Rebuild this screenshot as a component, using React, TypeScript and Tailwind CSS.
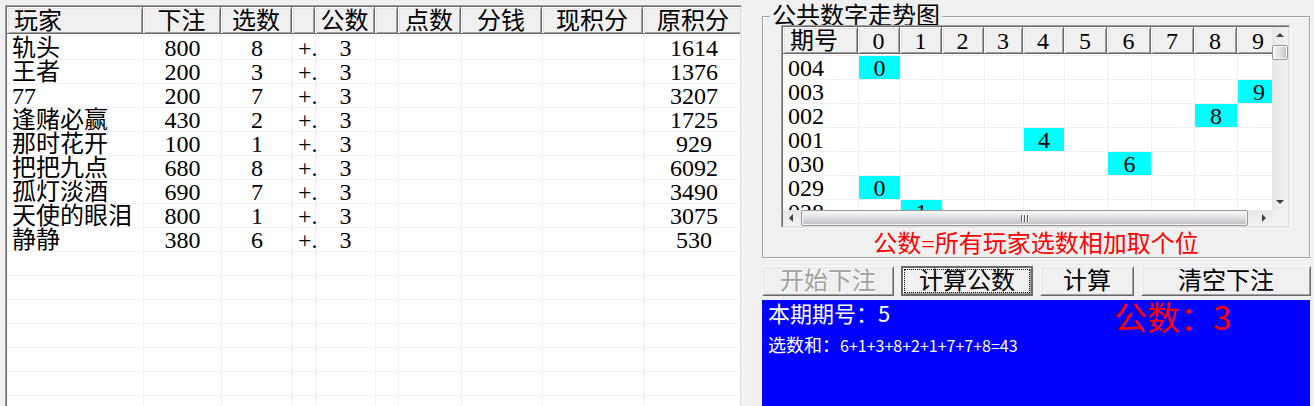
import React from "react";

type Player = { name: string; bet: number; pick: number; original: number };

const players: Player[] = [
  { name: "轨头", bet: 800, pick: 8, original: 1614 },
  { name: "王者", bet: 200, pick: 3, original: 1376 },
  { name: "77", bet: 200, pick: 7, original: 3207 },
  { name: "逢赌必赢", bet: 430, pick: 2, original: 1725 },
  { name: "那时花开", bet: 100, pick: 1, original: 929 },
  { name: "把把九点", bet: 680, pick: 8, original: 6092 },
  { name: "孤灯淡酒", bet: 690, pick: 7, original: 3490 },
  { name: "天使的眼泪", bet: 800, pick: 1, original: 3075 },
  { name: "静静", bet: 380, pick: 6, original: 530 },
];

const publicNumber = 3;
const emptyRows = 7;

const playerHeads = ["玩家", "下注", "选数", "", "公数", "", "点数", "分钱", "现积分", "原积分"];

const trend = [
  { period: "004", digit: 0 },
  { period: "003", digit: 9 },
  { period: "002", digit: 8 },
  { period: "001", digit: 4 },
  { period: "030", digit: 6 },
  { period: "029", digit: 0 },
  { period: "028", digit: 1 },
];

const digits = [0, 1, 2, 3, 4, 5, 6, 7, 8, 9];

const sunken =
  "border-t border-r-2 border-b-2 border-l border-t-[#696969] border-l-[#696969] border-r-[#e3e3e3] border-b-[#e3e3e3] shadow-[-1px_-1px_0_#a0a0a0,1px_1px_0_#fff]";

function HeadCell({ children, left }: { children?: React.ReactNode; left?: boolean }) {
  return (
    <th
      className={`h-[27px] whitespace-nowrap border-r border-b border-[#696969] bg-[#f0f0f0] p-0 pt-[2px] font-normal leading-6 shadow-[inset_1px_1px_0_#fff,inset_2px_2px_0_#e3e3e3,inset_-1px_-1px_0_#a0a0a0] ${
        left ? "pl-[7px] text-left" : "text-center"
      }`}
    >
      {children}
    </th>
  );
}

function Cell({
  children,
  kind = "center",
  lit,
}: {
  children?: React.ReactNode;
  kind?: "first" | "center" | "start";
  lit?: boolean;
}) {
  const look = {
    first: "pl-[5px] text-left",
    center: "border-l text-center",
    start: "border-l pl-[5px] text-left",
  }[kind];
  return (
    <td
      className={`h-6 whitespace-nowrap border-b border-[#f0f0f0] p-0 pt-[2px] leading-[21px] ${look} ${
        lit ? "bg-[#00ffff]" : ""
      }`}
    >
      {children}
    </td>
  );
}

function SpacerRow({ columns }: { columns: number }) {
  return (
    <tr>
      {Array.from({ length: columns }, (_, i) => (
        <td key={i} className={`h-[2px] border-b border-[#f0f0f0] p-0 ${i ? "border-l" : ""}`} />
      ))}
    </tr>
  );
}

function PlayerTable() {
  return (
    <table className="w-[calc(100%+4px)] table-fixed border-separate border-spacing-0">
      <colgroup>
        <col className="w-[136px]" />
        <col className="w-[78px]" />
        <col className="w-[71px]" />
        <col className="w-[23px]" />
        <col className="w-[60px]" />
        <col className="w-[23px]" />
        <col className="w-[63px]" />
        <col className="w-[81px]" />
        <col className="w-[101px]" />
        <col />
      </colgroup>
      <thead>
        <tr>
          {playerHeads.map((head, i) => (
            <HeadCell key={i} left={i === 0}>
              {head}
            </HeadCell>
          ))}
        </tr>
      </thead>
      <tbody>
        <SpacerRow columns={10} />
        {players.map((p) => (
          <tr key={p.name}>
            <Cell kind="first">{p.name}</Cell>
            <Cell>{p.bet}</Cell>
            <Cell>{p.pick}</Cell>
            <Cell kind="start">+.</Cell>
            <Cell>{publicNumber}</Cell>
            <Cell />
            <Cell />
            <Cell />
            <Cell />
            <Cell>{p.original}</Cell>
          </tr>
        ))}
        {Array.from({ length: emptyRows }, (_, r) => (
          <tr key={r}>
            {playerHeads.map((_, i) => (
              <Cell key={i} kind={i ? "center" : "first"} />
            ))}
          </tr>
        ))}
      </tbody>
    </table>
  );
}

function TrendTable() {
  return (
    <table className="w-[497px] table-fixed border-separate border-spacing-0">
      <colgroup>
        <col className="w-[75px]" />
        <col className="w-[42px]" />
        <col className="w-[42px]" />
        <col className="w-[42px]" />
        <col className="w-[39px]" />
        <col className="w-[41px]" />
        <col className="w-[43px]" />
        <col className="w-[44px]" />
        <col className="w-[43px]" />
        <col className="w-[43px]" />
        <col className="w-[43px]" />
      </colgroup>
      <thead>
        <tr>
          <HeadCell left>期号</HeadCell>
          {digits.map((d) => (
            <HeadCell key={d}>{d}</HeadCell>
          ))}
        </tr>
      </thead>
      <tbody>
        <SpacerRow columns={11} />
        {trend.map((row) => (
          <tr key={row.period}>
            <Cell kind="first">{row.period}</Cell>
            {digits.map((d) => (
              <Cell key={d} lit={d === row.digit}>
                {d === row.digit ? d : null}
              </Cell>
            ))}
          </tr>
        ))}
      </tbody>
    </table>
  );
}

function Arrow({ points, label }: { points: string; label: string }) {
  return (
    <button type="button" aria-label={label} className="flex size-4 shrink-0 items-center justify-center">
      <svg viewBox="0 0 8 8" className="size-2" aria-hidden="true">
        <polygon points={points} fill="#404040" />
      </svg>
    </button>
  );
}

function VerticalScroll() {
  return (
    <div className="flex w-4 shrink-0 flex-col bg-gradient-to-r from-[#e6e6e6] to-[#f2f2f2]">
      <Arrow label="向上" points="0,6 4,2 8,6" />
      <div className="mt-[2px] h-[15px] shrink-0 rounded-[2px] border border-[#979797] bg-gradient-to-r from-[#f5f5f5] via-[#e2e2e4] to-[#bfc0c4] shadow-[inset_0_0_0_1px_#fff]" />
      <div className="grow" />
      <Arrow label="向下" points="0,2 4,6 8,2" />
    </div>
  );
}

function HorizontalScroll() {
  return (
    <div className="flex h-4 bg-[#f0f0f0]">
      <div className="flex min-w-0 grow bg-gradient-to-b from-[#e6e6e6] to-[#f2f2f2]">
        <Arrow label="向左" points="6,0 2,4 6,8" />
        <div className="ml-[2px] flex grow items-center justify-center gap-px rounded-[2px] border border-[#979797] bg-gradient-to-b from-[#f5f5f5] from-10% via-[#dcdde0] via-50% to-[#bfc0c4] shadow-[inset_0_0_0_1px_#f4f4f4]">
          <span className="h-[7px] w-[2px] border-r border-white bg-[#606060]" />
          <span className="h-[7px] w-[2px] border-r border-white bg-[#606060]" />
          <span className="h-[7px] w-[2px] border-r border-white bg-[#606060]" />
        </div>
        <div className="w-2 shrink-0" />
        <Arrow label="向右" points="2,0 6,4 2,8" />
      </div>
      <div className="w-4 shrink-0" />
    </div>
  );
}

function PushButton({
  children,
  disabled,
  active,
}: {
  children: React.ReactNode;
  disabled?: boolean;
  active?: boolean;
}) {
  const edge = active
    ? "border-2 border-[#696969] p-px shadow-[inset_1px_1px_0_#fff,inset_-1px_-1px_0_#a0a0a0]"
    : "border border-t-white border-l-white border-r-[#696969] border-b-[#696969] p-[2px] shadow-[inset_1px_1px_0_#e3e3e3,inset_-1px_-1px_0_#a0a0a0]";
  return (
    <button
      type="button"
      disabled={disabled}
      className={`h-[30px] min-w-0 bg-[#f0f0f0] leading-[22px] ${edge} ${
        disabled ? "text-[#a0a0a0] [text-shadow:1px_1px_0_#fff]" : ""
      }`}
    >
      <span
        className={`block whitespace-nowrap border border-dotted ${active ? "border-black" : "border-transparent"}`}
      >
        {children}
      </span>
    </button>
  );
}

export default function App() {
  return (
    <main className="grid h-screen grid-cols-[738fr_549fr] gap-[19px] overflow-hidden bg-[#f0f0f0] pr-[3px] pl-[5px] font-['Liberation_Serif','Noto_Sans_CJK_SC',serif] text-[24px] text-black">
      <section className="flex min-w-0 flex-col pt-[6px] pr-px pl-px">
        <div className={`min-h-0 grow overflow-hidden bg-white ${sunken}`}>
          <PlayerTable />
        </div>
      </section>

      <section className="flex min-w-0 flex-col pt-1">
        <fieldset className="mr-px min-w-0 border border-[#a0a0a0] px-[19px] shadow-[inset_1px_1px_0_#fff,1px_1px_0_#fff]">
          <legend className="-ml-3 bg-[#f0f0f0] px-[2px] pt-px leading-[23px]">公共数字走势图</legend>
          <div className={`relative -mt-[2px] bg-[#f0f0f0] ${sunken}`}>
            <div className="flex h-[183px]">
              <div className="min-w-0 grow overflow-hidden bg-white">
                <TrendTable />
              </div>
              <VerticalScroll />
            </div>
            <HorizontalScroll />
          </div>
          <p className="pt-1 pb-px text-center leading-6 text-[#ff0000]">公数=所有玩家选数相加取个位</p>
        </fieldset>

        <div className="mt-2 grid grid-cols-[132fr_132fr_94fr_170fr] gap-[7px]">
          <PushButton disabled>开始下注</PushButton>
          <PushButton active>计算公数</PushButton>
          <PushButton>计算</PushButton>
          <PushButton>清空下注</PushButton>
        </div>

        <div className="mt-1 mr-px flex grow bg-[#0000ff] font-['Noto_Sans_CJK_SC',sans-serif] text-white">
          <div className="w-[352px] shrink-0 pl-[6px]">
            <p className="text-[22px] leading-6">本期期号：5</p>
            <p className="pt-2 text-[18px] leading-6">
              选数和：<span className="text-[16px]">6+1+3+8+2+1+7+7+8=43</span>
            </p>
          </div>
          <p className="whitespace-nowrap text-[33px] leading-8 text-[#ff0000]">公数：3</p>
        </div>
      </section>
    </main>
  );
}
